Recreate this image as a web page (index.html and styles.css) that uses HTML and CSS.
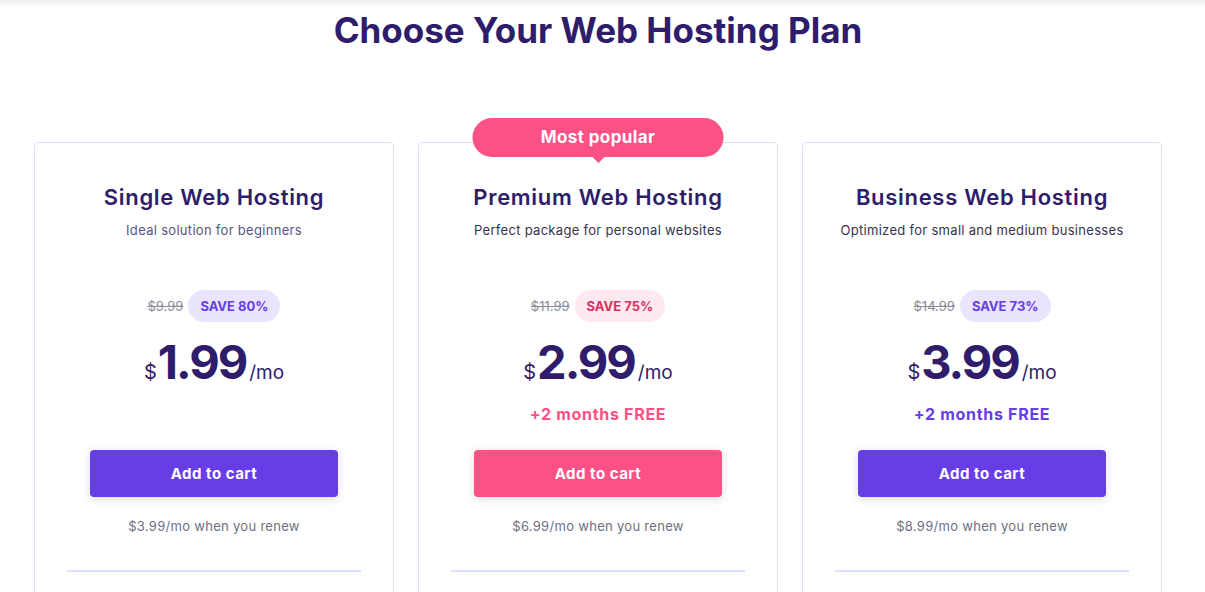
FILE: index.html
```html
<!DOCTYPE html>
<html lang="en">
<head>
    <meta charset="UTF-8">
    <meta name="viewport" content="width=device-width, initial-scale=1.0">
    <title>Hosting Plans</title>
    <link rel="stylesheet" href="styles.css">
</head>
<body>
    <div class="top_shadow"></div>
    <div id="page">
        <h1 class="page_title">Choose Your Web Hosting Plan</h1>

        <div id="plans">
            <div class="plan">
                <h2 class="plan_name">Single Web Hosting</h2>
                <p class="plan_desc light">Ideal solution for beginners</p>
                <div class="price_row">
                    <span class="old_price">$9.99</span>
                    <span class="save">SAVE 80%</span>
                </div>
                <div class="price">
                    <span class="cur">$</span><span class="amount">1.99</span><span class="per">/mo</span>
                </div>
                <div class="bonus empty">&nbsp;</div>
                <button class="cart_btn">Add to cart</button>
                <p class="renew">$3.99/mo when you renew</p>
                <div class="divider"></div>
            </div>

            <div class="plan popular">
                <div class="popular_tag">Most popular</div>
                <h2 class="plan_name">Premium Web Hosting</h2>
                <p class="plan_desc">Perfect package for personal websites</p>
                <div class="price_row">
                    <span class="old_price">$11.99</span>
                    <span class="save pink">SAVE 75%</span>
                </div>
                <div class="price">
                    <span class="cur">$</span><span class="amount">2.99</span><span class="per">/mo</span>
                </div>
                <div class="bonus pink">+2 months FREE</div>
                <button class="cart_btn pink">Add to cart</button>
                <p class="renew">$6.99/mo when you renew</p>
                <div class="divider"></div>
            </div>

            <div class="plan">
                <h2 class="plan_name">Business Web Hosting</h2>
                <p class="plan_desc">Optimized for small and medium businesses</p>
                <div class="price_row">
                    <span class="old_price">$14.99</span>
                    <span class="save">SAVE 73%</span>
                </div>
                <div class="price">
                    <span class="cur">$</span><span class="amount">3.99</span><span class="per">/mo</span>
                </div>
                <div class="bonus">+2 months FREE</div>
                <button class="cart_btn">Add to cart</button>
                <p class="renew">$8.99/mo when you renew</p>
                <div class="divider"></div>
            </div>
        </div>
    </div>
</body>
</html>
```

FILE: styles.css
```css
body{
    margin: 0;
    background: #fff;
    font-family: "Inter", "Lato", sans-serif;
    color: #2f1c6a;
    overflow: hidden;
}

.top_shadow{
    height: 8px;
    background: linear-gradient(#f0f0f2, #fff);
}

#page{
    width: 1196px;
}

.page_title{
    margin: 0;
    text-align: center;
    font-size: 35px;
    line-height: 44px;
    font-weight: 700;
    color: #2f1c6a;
}

#plans{
    display: flex;
    justify-content: center;
    gap: 24px;
    margin-top: 90px;
}

.plan{
    position: relative;
    width: 360px;
    box-sizing: border-box;
    border: 1px solid #d8e0ff;
    border-radius: 4px;
    padding: 40px 32px 80px;
    display: flex;
    flex-direction: column;
    align-items: center;
}

.popular_tag{
    position: absolute;
    top: -25px;
    left: 50%;
    transform: translateX(-50%);
    width: 251px;
    height: 39px;
    line-height: 39px;
    border-radius: 20px;
    background: #fc5185;
    color: #fff;
    font-size: 17px;
    font-weight: 700;
    letter-spacing: 0.4px;
    text-align: center;
}

.popular_tag::after{
    content: "";
    position: absolute;
    left: 50%;
    bottom: -6px;
    margin-left: -6px;
    border-left: 6px solid transparent;
    border-right: 6px solid transparent;
    border-top: 6px solid #fc5185;
}

.plan_name{
    margin: 0;
    font-size: 22px;
    line-height: 28px;
    font-weight: 600;
    letter-spacing: 0.7px;
    color: #2f1c6a;
}

.plan_desc{
    margin: 9px 0 0;
    font-size: 13px;
    line-height: 20px;
    letter-spacing: 0.3px;
    color: #36344d;
}

.plan_desc.light{
    color: #5b5484;
}

.price_row{
    margin-top: 50px;
    display: flex;
    align-items: center;
    gap: 5px;
    height: 32px;
}

.old_price{
    font-size: 13px;
    color: #8c8a97;
    text-decoration: line-through;
}

.save{
    height: 32px;
    line-height: 32px;
    padding: 0 12px;
    border-radius: 16px;
    background: #ebe4ff;
    color: #673de6;
    font-size: 13px;
    font-weight: 700;
}

.save.pink{
    background: #ffe8ef;
    color: #d63163;
}

.price{
    margin-top: 12px;
    height: 56px;
    line-height: 56px;
    white-space: nowrap;
}

.cur{
    font-size: 20px;
    margin-right: 1px;
}

.amount{
    font-size: 47px;
    font-weight: 700;
    letter-spacing: -2px;
}

.per{
    font-size: 19px;
    margin-left: 3px;
}

.bonus{
    margin-top: 12px;
    height: 24px;
    line-height: 24px;
    font-size: 16px;
    font-weight: 700;
    letter-spacing: 0.7px;
    color: #673de6;
}

.bonus.pink{
    color: #fc5185;
}

.cart_btn{
    margin-top: 24px;
    width: 248px;
    height: 47px;
    border: none;
    border-radius: 4px;
    background: #673de6;
    color: #fff;
    font-family: inherit;
    font-size: 15px;
    font-weight: 700;
    letter-spacing: 0.5px;
    box-shadow: 0 2px 8px rgba(29, 30, 32, 0.15);
}

.cart_btn.pink{
    background: #fc5185;
}

.renew{
    margin: 19px 0 0;
    font-size: 13px;
    line-height: 20px;
    letter-spacing: 0.3px;
    color: #6d7081;
}

.divider{
    margin-top: 34px;
    width: 100%;
    height: 2px;
    background: #dae1ff;
}
```
